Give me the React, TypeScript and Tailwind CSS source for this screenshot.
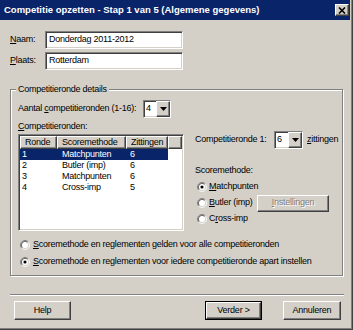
import React from "react";

const sunken =
  "border border-t-[#808080] border-l-[#808080] border-r-white border-b-white shadow-[inset_1px_1px_0_#404040,inset_-1px_-1px_0_#d4d0c8]";
const raised =
  "border border-t-white border-l-white border-r-[#404040] border-b-[#404040] shadow-[inset_-1px_-1px_0_#808080,inset_1px_1px_0_#d4d0c8]";

function Radio({ checked }: { checked?: boolean }) {
  return (
    <svg width="10" height="10" viewBox="0 0 12 12" className="shrink-0">
      <circle cx="6" cy="6" r="4.3" fill="#fff" />
      <path d="M2.11 9.89A5.5 5.5 0 0 1 9.89 2.11" fill="none" stroke="#808080" />
      <path d="M9.89 2.11A5.5 5.5 0 0 1 2.11 9.89" fill="none" stroke="#fff" />
      <path d="M2.82 9.18A4.5 4.5 0 0 1 9.18 2.82" fill="none" stroke="#404040" />
      <path d="M9.18 2.82A4.5 4.5 0 0 1 2.82 9.18" fill="none" stroke="#d4d0c8" />
      {checked && <circle cx="6" cy="6" r="1.9" fill="#000" />}
    </svg>
  );
}

function Combo({ value, className }: { value: string; className: string }) {
  return (
    <div className={`${sunken} ${className} flex h-[18px] bg-white`}>
      <div className="flex-1 pl-[2px] flex items-center">{value}</div>
      <div className={`${raised} w-[14px] bg-[#d4d0c8] flex items-center justify-center`}>
        <svg width="7" height="4" viewBox="0 0 7 4">
          <path d="M0 0h7L3.5 4z" fill="#000" />
        </svg>
      </div>
    </div>
  );
}

const rows = [
  { ronde: "1", methode: "Matchpunten", zit: "6" },
  { ronde: "2", methode: "Butler (imp)", zit: "6" },
  { ronde: "3", methode: "Matchpunten", zit: "6" },
  { ronde: "4", methode: "Cross-imp", zit: "5" },
];

export default function App() {
  return (
    <div className="w-[353px] h-[330px] border-r border-b border-[#404040] font-['Liberation_Sans',Arial,sans-serif] text-[9px] tracking-[-0.25px] text-black">
      <div className="h-full border-r border-b border-[#808080]">
        <div className="h-full border-r border-b border-[#d4d0c8] bg-[#d4d0c8] flex flex-col">
          {/* title bar */}
          <div className="h-[20px] shrink-0 bg-[#0a246a] flex items-center justify-between pl-[4px] pr-[1px]">
            <span className="text-white font-bold text-[9.5px] tracking-normal">
              Competitie opzetten - Stap 1 van 5 (Algemene gegevens)
            </span>
            <div className={`${raised} w-[14px] h-[12px] bg-[#d4d0c8] flex items-center justify-center`}>
              <svg width="8" height="7" viewBox="0 0 8 7">
                <path d="M1 0.5l6 6M7 0.5l-6 6" stroke="#000" strokeWidth="1.6" />
              </svg>
            </div>
          </div>

          <div className="flex flex-col pl-[10px]">
            <div className="mt-[11px] flex items-center h-[18px]">
              <span className="w-[35px]">
                <u>N</u>aam:
              </span>
              <div className={`${sunken} w-[138px] h-[18px] bg-white flex items-center pl-[3px]`}>
                Donderdag 2011-2012
              </div>
            </div>
            <div className="mt-[3px] flex items-center h-[18px]">
              <span className="w-[35px]">
                <u>P</u>laats:
              </span>
              <div className={`${sunken} w-[138px] h-[18px] bg-white flex items-center pl-[3px]`}>
                Rotterdam
              </div>
            </div>

            {/* group box */}
            <div className="relative mt-[19px] w-[333px] h-[187px] border border-[#808080] shadow-[inset_1px_1px_0_#fff,1px_1px_0_#fff] pl-[7px] pt-[10px] flex flex-col">
              <span className="absolute left-[5px] top-[-6px] px-[2px] bg-[#d4d0c8] leading-[11px]">
                Competitieronde details
              </span>

              <div className="flex items-center h-[18px]">
                <span className="w-[125px]">
                  Aantal <u>c</u>ompetitieronden (1-16):
                </span>
                <Combo value="4" className="w-[28px]" />
              </div>

              <div className="mt-[3px] flex">
                <div className="w-[166px] flex flex-col">
                  <div className="h-[11px] leading-[11px]">
                    <u>C</u>ompetitieronden:
                  </div>
                  <div className={`${sunken} mt-[2px] h-[97px] bg-white p-[1px] flex flex-col`}>
                    <div className="flex h-[13px] shrink-0">
                      {[
                        ["Ronde", "w-[37px]"],
                        ["Scoremethode", "w-[69px]"],
                        ["Zittingen", "w-[42px]"],
                        ["", "flex-1"],
                      ].map(([t, w], i) => (
                        <div
                          key={i}
                          className={`${w} bg-[#d4d0c8] border-t border-l border-t-white border-l-white border-r border-b border-r-[#404040] border-b-[#404040] shadow-[inset_-1px_-1px_0_#808080] flex items-center pl-[4px]`}
                        >
                          {t}
                        </div>
                      ))}
                    </div>
                    {rows.map((r, i) => (
                      <div
                        key={r.ronde}
                        className={`flex h-[11px] items-center w-[148px] ${i === 0 ? "bg-[#0a246a] text-white" : ""}`}
                      >
                        <span className="w-[37px] pl-[2px]">{r.ronde}</span>
                        <span className="w-[69px] pl-[5px]">{r.methode}</span>
                        <span className="w-[42px] pl-[4px]">{r.zit}</span>
                      </div>
                    ))}
                  </div>
                </div>

                <div className="ml-[11px] flex flex-col">
                  <div className="mt-[10px] flex items-center h-[18px]">
                    <span className="w-[79px]">Competitieronde 1:</span>
                    <Combo value="6" className="w-[29px]" />
                    <span className="ml-[4px]">
                      <u>z</u>ittingen
                    </span>
                  </div>
                  <div className="mt-[16px] h-[11px] leading-[11px]">Scoremethode:</div>
                  <div className="mt-[3px] flex flex-col">
                    <div className="h-[16px] flex items-center pl-[2px] gap-[2px]">
                      <Radio checked />
                      <span>
                        <u>M</u>atchpunten
                      </span>
                    </div>
                    <div className="h-[16px] flex items-center">
                      <div className="w-[62px] flex items-center pl-[2px] gap-[2px]">
                        <Radio />
                        <span>
                          <u>B</u>utler (imp)
                        </span>
                      </div>
                      <div className={`${raised} w-[72px] h-[17px] bg-[#d4d0c8] flex items-center justify-center text-[#808080] [text-shadow:1px_1px_0_#fff]`}>
                        <span>
                          <u>I</u>nstellingen
                        </span>
                      </div>
                    </div>
                    <div className="h-[16px] flex items-center pl-[2px] gap-[2px]">
                      <Radio />
                      <span>
                        C<u>r</u>oss-imp
                      </span>
                    </div>
                  </div>
                </div>
              </div>

              <div className="mt-[5px] flex flex-col">
                <div className="h-[17px] flex items-center pl-[2px] gap-[3px]">
                  <Radio />
                  <span>
                    <u>S</u>coremethode en reglementen gelden voor alle competitieronden
                  </span>
                </div>
                <div className="h-[17px] flex items-center pl-[2px] gap-[3px]">
                  <Radio checked />
                  <span>
                    <u>S</u>coremethode en reglementen voor iedere competitieronde apart instellen
                  </span>
                </div>
              </div>
            </div>

            {/* separator */}
            <div className="mt-[18px] w-[334px] h-[2px] border-t border-t-[#808080] border-b border-b-white" />

            <div className="mt-[5px] flex h-[19px]">
              <div className={`${raised} ml-[4px] w-[57px] bg-[#d4d0c8] flex items-center justify-center`}>
                Help
              </div>
              <div className="ml-[134px] w-[57px] border border-black">
                <div className={`${raised} h-full bg-[#d4d0c8] flex items-center justify-center`}>
                  Verder &gt;
                </div>
              </div>
              <div className={`${raised} ml-[21px] w-[58px] bg-[#d4d0c8] flex items-center justify-center`}>
                Annuleren
              </div>
            </div>
          </div>
        </div>
      </div>
    </div>
  );
}
